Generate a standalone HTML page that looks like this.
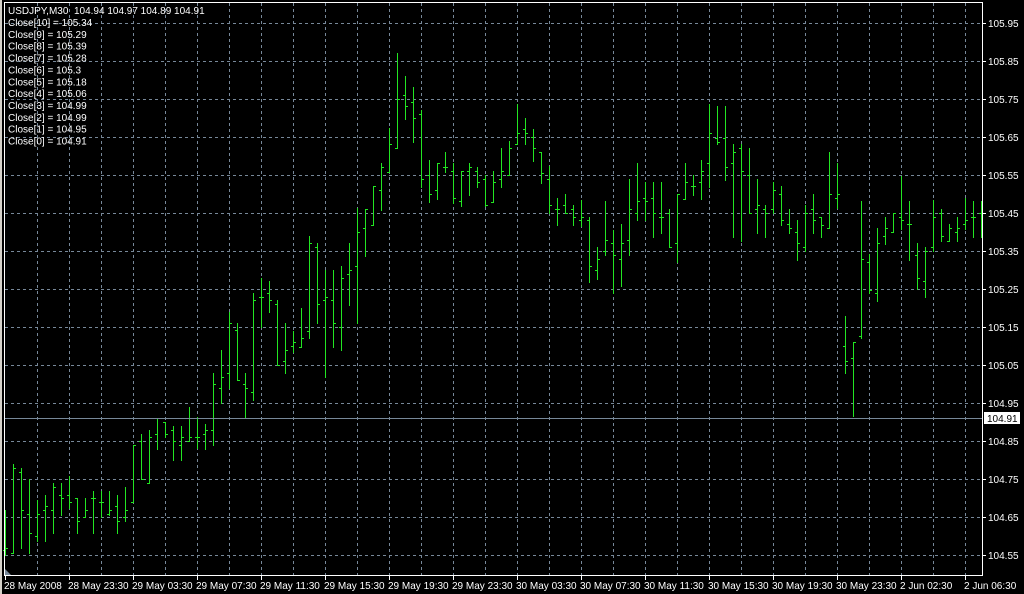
<!DOCTYPE html>
<html><head><meta charset="utf-8">
<style>
html,body{margin:0;padding:0;background:#000;width:1024px;height:594px;overflow:hidden}
svg{display:block}
text{font-family:"Liberation Sans",sans-serif;font-size:10px;fill:#fff}
</style></head>
<body>
<svg id="c" width="1024" height="594" xmlns="http://www.w3.org/2000/svg"></svg>
<script>
var s='';
s+='<rect x="0" y="0" width="1024" height="594" fill="#000"/>';
s+='<rect x="0" y="0" width="2" height="594" fill="#d4d0c8"/>';
for(var k=1;k<=30;k++){var x=5+32*k+0.5;s+='<line x1="'+x+'" y1="3" x2="'+x+'" y2="575" stroke="#778899" stroke-dasharray="3,3"/>';}
for(var k=0;k<=14;k++){var y=23+38*k+0.5;s+='<line x1="5" y1="'+y+'" x2="982" y2="'+y+'" stroke="#778899" stroke-dasharray="3,3"/>';}
var seg=[
 {off:220,i0:0,d:[[870,1005,990,985],[732,998,998,745],[745,985,757,871],[777,998,883,940],[840,962,948,883],[825,962,871,859],[790,940,871,802],[790,885,826,835],[768,865,826,847],[835,940,835,904],[833,892,892,871],[813,940,835,835],[813,892,847,847],[813,885,883,871],[825,940,859,904],[800,904,892,871],[676,847,847,676],[642,778,664,778],[630,790,790,652],[595,688,642,595],[607,652,607,642],[618,720,630,664],[618,720,676,652],[562,664,664,652],[590,683,652,652],[612,688,642,630],[460,676,630,493],[390,550,505,470],[276,505,460,310],[310,480,330,480],[460,595,493,505],[220,540,517,240],[175,322,232,232],[183,276,220,240],[240,436,252,436],[310,460,424,390],[333,397,378,367],[265,380,380,355],[48,355,333,70],[70,310,82,252],[150,472,240,232],[150,380,240,310]]},
 {off:40,i0:42,d:[[678,930,860,715],[608,795,703,690],[505,848,678,577],[508,648,565,508],[438,555,555,438],[370,510,451,382],[265,395,395,313],[40,325,325,178],[108,236,165,199],[141,305,186,235],[210,440,222,418],[360,485,406,463],[370,478,451,370],[336,395,382,382],[370,490,394,474],[394,497,484,394],[370,464,394,382],[382,440,394,427],[406,497,418,495],[394,485,485,427],[324,440,418,394],[304,406,406,325],[193,313,313,280],[235,313,268,280],[268,362,292,325],[337,428,337,400],[377,520,418,495],[474,554,508,508],[462,520,495,520],[495,554,508,531],[480,558,541,531],[531,725,541,678],[620,716,690,657],[483,646,633,600],[570,760,610,646],[552,737,657,610],[416,646,600,508],[369,541,520,484],[426,541,474,484],[426,590,474,520]]},
 {off:90,i0:82,d:[[276,428,382,382],[357,472,370,472],[313,516,460,313],[219,326,326,276],[256,314,289,289],[210,326,276,243],[42,290,219,130],[48,163,143,155],[48,269,143,232],[162,440,219,186],[162,452,175,243],[175,370,256,370],[268,428,358,346],[345,440,358,370],[277,370,358,300],[289,404,313,390],[357,428,402,414],[390,509,427,460],[345,484,472,370],[312,428,358,390],[381,440,381,404],[186,415,415,313],[219,355,325,313],[678,850,769,814],[757,977,805,757],[333,745,737,508],[492,610,517,600],[413,632,609,460],[381,461,438,413],[370,427,427,370],[258,416,381,390],[333,509,403,403],[460,598,496,565],[471,622,574,484],[331,484,472,381],[357,452,370,438],[402,452,452,414],[381,452,427,414],[324,416,403,390],[333,440,381,381],[333,440,370,370]]}
];
var col='#22e622';
seg.forEach(function(g){g.d.forEach(function(b,j){
 var i=g.i0+j,x=5+8*i;var f=function(z){return Math.round(g.off+z/3);};
 var h=f(b[0]),l=f(b[1]),o=f(b[2]),c=f(b[3]);
 if(l>574)l=574;
 s+='<rect x="'+x+'" y="'+h+'" width="1" height="'+(l-h+1)+'" fill="'+col+'"/>';
 s+='<rect x="'+(x-2)+'" y="'+o+'" width="2" height="1" fill="'+col+'"/>';
 s+='<rect x="'+(x+1)+'" y="'+c+'" width="2" height="1" fill="'+col+'"/>';
});});
s+='<line x1="5" y1="418.5" x2="982" y2="418.5" stroke="#778899"/>';
s+='<rect x="4.5" y="2.5" width="978" height="573" fill="none" stroke="#fff"/>';
s+='<polygon points="5,569 5,575 11,575" fill="#778899"/>';
var pr=['105.95','105.85','105.75','105.65','105.55','105.45','105.35','105.25','105.15','105.05','104.95','104.85','104.75','104.65','104.55'];
pr.forEach(function(p,k){var y=23+38*k;s+='<rect x="983" y="'+y+'" width="3" height="1" fill="#fff"/>';s+='<text x="988" y="'+(y+4)+'">'+p+'</text>';});
s+='<rect x="984" y="412" width="36" height="12" fill="#fff"/>';
s+='<text x="987" y="422" style="fill:#000">104.91</text>';
var tl=['28 May 2008','28 May 23:30','29 May 03:30','29 May 07:30','29 May 11:30','29 May 15:30','29 May 19:30','29 May 23:30','30 May 03:30','30 May 07:30','30 May 11:30','30 May 15:30','30 May 19:30','30 May 23:30','2 Jun 02:30','2 Jun 06:30'];
tl.forEach(function(t,k){var x=5+64*k;s+='<rect x="'+x+'" y="576" width="1" height="4" fill="#fff"/>';s+='<text x="'+(x-1)+'" y="589">'+t+'</text>';});
s+='<text x="8" y="14">USDJPY,M30&#160;&#160;104.94 104.97 104.89 104.91</text>';
var cl=['105.34','105.29','105.39','105.28','105.3','105.18','105.06','104.99','104.99','104.95','104.91'];
cl.forEach(function(v,k){s+='<text x="8" y="'+(26+11.85*k).toFixed(1)+'">Close['+(10-k)+'] = '+v+'</text>';});
document.getElementById('c').innerHTML=s;
</script>
</body></html>
